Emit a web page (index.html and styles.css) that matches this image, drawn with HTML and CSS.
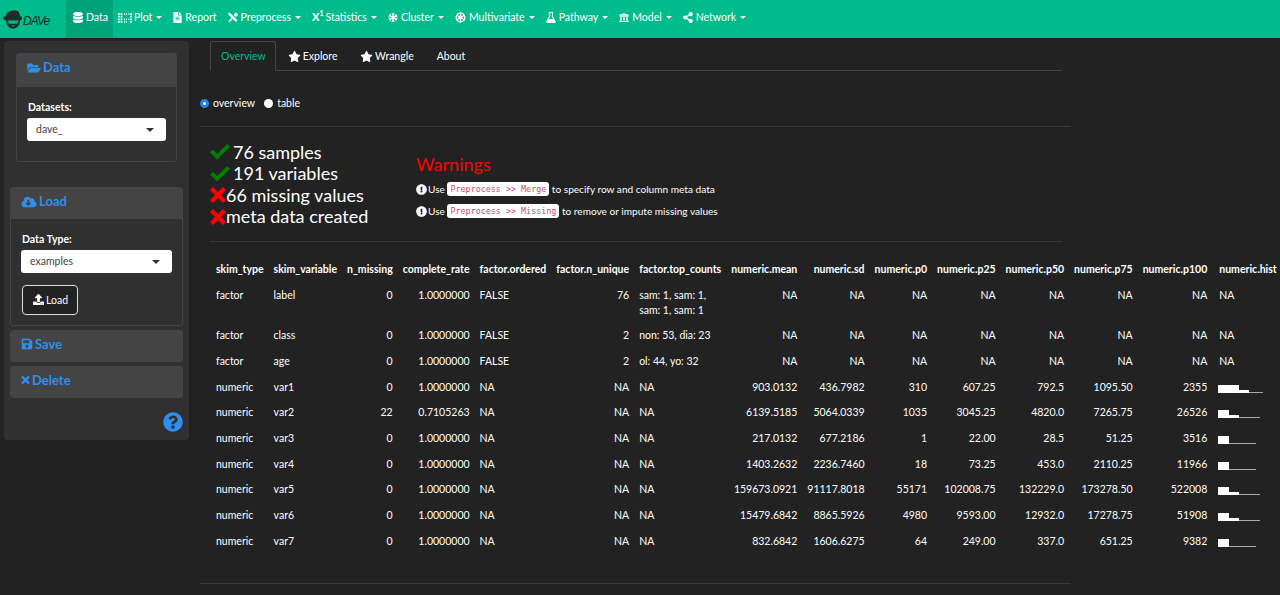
FILE: index.html
```html
<!DOCTYPE html>
<html lang="en">

<head>
  <meta charset="UTF-8" />
  <title>DAVe</title>
  <link rel="stylesheet" href="styles.css">
</head>

<body>

  <svg class="sprite" xmlns="http://www.w3.org/2000/svg">
    <symbol id="i-database" viewBox="0 0 448 512"><path d="M448 73.143v45.714C448 159.143 347.667 192 224 192S0 159.143 0 118.857V73.143C0 32.857 100.333 0 224 0s224 32.857 224 73.143zM448 176v102.857C448 319.143 347.667 352 224 352S0 319.143 0 278.857V176c48.125 33.143 136.208 48.572 224 48.572S399.874 209.143 448 176zm0 160v102.857C448 479.143 347.667 512 224 512S0 479.143 0 438.857V336c48.125 33.143 136.208 48.572 224 48.572S399.874 369.143 448 336z"/></symbol>
    <symbol id="i-grid" viewBox="0 0 16 12"><path d="M0 1h2v2H0zM3 1h2v2H3zM0 4h2v2H0zM3 4h2v2H3zM0 7h2v2H0zM3 7h2v2H3zM0 10h2v2H0zM3 10h2v2H3zM7 1h1v2H7zM9 1h1v2H9zM7 7h1v2H7zM9 7h1v2H9zM7 10h1v2H7zM9 10h1v2H9zM12 1h1v2h-1zM14 1h2v2h-2zM14 4h2v2h-2zM12 7h1v2h-1zM14 7h2v2h-2zM14 10h2v2h-2z"/></symbol>
    <symbol id="i-file" viewBox="0 0 384 512"><path d="M224 136V0H24C10.7 0 0 10.7 0 24v464c0 13.3 10.7 24 24 24h336c13.3 0 24-10.7 24-24V160H248c-13.2 0-24-10.8-24-24zm64 236c0 6.6-5.4 12-12 12H108c-6.6 0-12-5.4-12-12v-8c0-6.6 5.4-12 12-12h168c6.6 0 12 5.4 12 12v8zm0-64c0 6.6-5.4 12-12 12H108c-6.6 0-12-5.4-12-12v-8c0-6.6 5.4-12 12-12h168c6.6 0 12 5.4 12 12v8zm0-72v8c0 6.6-5.4 12-12 12H108c-6.6 0-12-5.4-12-12v-8c0-6.6 5.4-12 12-12h168c6.6 0 12 5.4 12 12zm96-114.1v6.1H256V0h6.1c6.4 0 12.5 2.5 17 7l97.9 98c4.5 4.5 7 10.6 7 16.9z"/></symbol>
    <symbol id="i-tools" viewBox="0 0 12 12"><path d="M2.6 0.6 11.4 9.4 9.4 11.4 0.6 2.6zM9.4 0.4c.6 0 1.1.1 1.6.4L9.2 2.6l.2 .3.3 .2 1.8-1.8c.5 1.2.2 2.4-.7 3.2-.5.5-1.2.7-1.8.7L7 3.2c0-1.5 1-2.8 2.4-2.8zM4.2 6.4 5.6 7.8 2.5 11c-.5.5-1 .5-1.5 0s-.5-1 0-1.5z"/><path d="M0 1.2 1.2 0 3.4 1.8 1.8 3.4z"/></symbol>
    <symbol id="i-snow" viewBox="0 0 24 24"><g fill="none" stroke="currentColor" stroke-width="3.4"><path d="M12 1v22M2.5 6.5l19 11M21.5 6.5l-19 11"/><path d="M8.5 2.5 12 6l3.5-3.5M8.5 21.5 12 18l3.5 3.5M1.5 10.5 6.5 9 5 4M22.5 13.5 17.5 15l1.5 5M22.5 10.5 17.5 9 19 4M1.5 13.5 6.5 15 5 20" stroke-width="2.4"/></g></symbol>
    <symbol id="i-wheel" viewBox="0 0 24 24"><g fill="none" stroke="currentColor"><circle cx="12" cy="12" r="9.5" stroke-width="3"/><circle cx="12" cy="12" r="3.5" stroke-width="2.4"/><path d="M12 1v22M2.5 6.5l19 11M21.5 6.5l-19 11" stroke-width="2.4"/></g></symbol>
    <symbol id="i-flask" viewBox="0 0 14 16"><path fill-rule="evenodd" d="M3.5 0h7v1.5H9.8v4.7l3.9 7.3c.6 1.2-.2 2.5-1.5 2.5H1.8C.5 16-.3 14.7.3 13.5l3.9-7.3V1.500h-.7zM5.7 1.500v5.100L4 10h6L8.300 6.600V1.500z"/></symbol>
    <symbol id="i-bank" viewBox="0 0 16 14"><path d="M8 0l8 3v1.200H0V3zM1 5h14v1H1zM2 6.500h2.400v5H2zM6.800 6.500h2.400v5H6.800zM11.600 6.500H14v5h-2.400zM1 12h14v1H1zM0 13h16v1H0z"/></symbol>
    <symbol id="i-share" viewBox="0 0 448 512"><path d="M352 320c-22.608 0-43.387 7.819-59.79 20.895l-102.486-64.054a96.551 96.551 0 0 0 0-41.683l102.486-64.054C308.613 184.181 329.392 192 352 192c53.019 0 96-42.981 96-96S405.019 0 352 0s-96 42.981-96 96c0 7.158.79 14.13 2.276 20.841L155.79 180.895C139.387 167.819 118.608 160 96 160c-53.019 0-96 42.981-96 96s42.981 96 96 96c22.608 0 43.387-7.819 59.79-20.895l102.486 64.054A96.301 96.301 0 0 0 256 416c0 53.019 42.981 96 96 96s96-42.981 96-96-42.981-96-96-96z"/></symbol>
    <symbol id="i-folder" viewBox="0 0 576 512"><path d="M572.694 292.093L500.27 416.248A63.997 63.997 0 0 1 444.989 448H45.025c-18.523 0-30.064-20.093-20.731-36.093l72.424-124.155A64 64 0 0 1 152 256h399.964c18.523 0 30.064 20.093 20.73 36.093zM152 224h328v-48c0-26.51-21.49-48-48-48H272l-64-64H48C21.49 64 0 85.49 0 112v278.046l69.077-118.418C86.214 242.25 117.989 224 152 224z"/></symbol>
    <symbol id="i-cloud" viewBox="0 0 640 512"><path d="M537.6 226.6c4.1-10.7 6.4-22.4 6.4-34.6 0-53-43-96-96-96-19.7 0-38.1 6-53.3 16.2C367 64.2 315.3 32 256 32c-88.4 0-160 71.6-160 160 0 2.7.1 5.4.2 8.1C40.2 219.8 0 273.2 0 336c0 79.5 64.5 144 144 144h368c70.7 0 128-57.3 128-128 0-61.9-44-113.6-102.4-125.4zm-132.9 88.7L299.3 420.7c-6.2 6.2-16.4 6.2-22.6 0L171.3 315.3c-10.1-10.1-2.9-27.3 11.3-27.3H248V176c0-8.8 7.2-16 16-16h48c8.8 0 16 7.2 16 16v112h65.4c14.2 0 21.4 17.2 11.3 27.3z"/></symbol>
    <symbol id="i-upload" viewBox="0 0 512 512"><path d="M296 384h-80c-13.3 0-24-10.7-24-24V192h-87.7c-17.8 0-26.7-21.5-14.1-34.1L242.3 5.7c7.5-7.5 19.8-7.5 27.3 0l152.2 152.2c12.6 12.6 3.7 34.1-14.1 34.1H320v168c0 13.3-10.7 24-24 24zm216-8v112c0 13.3-10.7 24-24 24H24c-13.3 0-24-10.7-24-24V376c0-13.3 10.7-24 24-24h136v8c0 30.9 25.1 56 56 56h80c30.9 0 56-25.1 56-56v-8h136c13.3 0 24 10.7 24 24zm-124 88c0-11-9-20-20-20s-20 9-20 20 9 20 20 20 20-9 20-20zm64 0c0-11-9-20-20-20s-20 9-20 20 9 20 20 20 20-9 20-20z"/></symbol>
    <symbol id="i-save" viewBox="0 0 448 512"><path d="M433.941 129.941l-83.882-83.882A48 48 0 0 0 316.118 32H48C21.49 32 0 53.49 0 80v352c0 26.51 21.49 48 48 48h352c26.51 0 48-21.49 48-48V163.882a48 48 0 0 0-14.059-33.941zM224 416c-35.346 0-64-28.654-64-64 0-35.346 28.654-64 64-64s64 28.654 64 64c0 35.346-28.654 64-64 64zm96-304.52V212c0 6.627-5.373 12-12 12H76c-6.627 0-12-5.373-12-12V108c0-6.627 5.373-12 12-12h228.52c3.183 0 6.235 1.264 8.485 3.515l3.48 3.48A11.996 11.996 0 0 1 320 111.48z"/></symbol>
    <symbol id="i-times" viewBox="0 0 352 512"><path d="M242.72 256l100.07-100.07c12.28-12.28 12.28-32.19 0-44.48l-22.24-22.24c-12.28-12.28-32.19-12.28-44.48 0L176 189.28 75.93 89.21c-12.28-12.28-32.19-12.28-44.48 0L9.21 111.45c-12.28 12.28-12.28 32.19 0 44.48L109.28 256 9.21 356.07c-12.28 12.28-12.28 32.19 0 44.48l22.24 22.24c12.28 12.28 32.2 12.28 44.48 0L176 322.72l100.07 100.07c12.28 12.28 32.2 12.28 44.48 0l22.24-22.24c12.28-12.28 12.28-32.19 0-44.48L242.72 256z"/></symbol>
    <symbol id="i-question" viewBox="0 0 512 512"><path d="M504 256c0 136.997-111.043 248-248 248S8 392.997 8 256C8 119.083 119.043 8 256 8s248 111.083 248 248zM262.655 90c-54.497 0-89.255 22.957-116.549 63.758-3.536 5.286-2.353 12.415 2.715 16.258l34.699 26.31c5.205 3.947 12.621 3.008 16.665-2.122 17.864-22.658 30.113-35.797 57.303-35.797 20.429 0 45.698 13.148 45.698 32.958 0 14.976-12.363 22.667-32.534 33.976C247.128 238.528 216 254.941 216 296v4c0 6.627 5.373 12 12 12h56c6.627 0 12-5.373 12-12v-1.333c0-28.462 83.186-29.647 83.186-106.667 0-58.002-60.165-102-116.531-102zM256 338c-25.365 0-46 20.635-46 46 0 25.364 20.635 46 46 46s46-20.636 46-46c0-25.365-20.635-46-46-46z"/></symbol>
    <symbol id="i-exclaim" viewBox="0 0 512 512"><path d="M504 256c0 136.997-111.043 248-248 248S8 392.997 8 256C8 119.083 119.043 8 256 8s248 111.083 248 248zm-248 50c-25.405 0-46 20.595-46 46s20.595 46 46 46 46-20.595 46-46-20.595-46-46-46zm-43.673-165.346l7.418 136c.347 6.364 5.609 11.346 11.982 11.346h48.546c6.373 0 11.635-4.982 11.982-11.346l7.418-136c.375-6.874-5.098-12.654-11.982-12.654h-63.383c-6.884 0-12.356 5.78-11.981 12.654z"/></symbol>
    <symbol id="i-star" viewBox="0 0 576 512"><path d="M259.3 17.8L194 150.2 47.9 171.5c-26.2 3.8-36.7 36.1-17.7 54.6l105.7 103-25 145.5c-4.5 26.3 23.2 46 46.4 33.7L288 439.6l130.7 68.7c23.2 12.2 50.9-7.4 46.4-33.7l-25-145.5 105.7-103c19-18.5 8.5-50.8-17.7-54.6L382 150.2 316.7 17.8c-11.7-23.6-45.6-23.9-57.4 0z"/></symbol>
    <symbol id="i-ok" viewBox="0 0 20 16"><path d="M0 8.5 2.8 5.7 7.2 10 17.2 0 20 2.8 7.2 15.6z"/></symbol>
    <symbol id="i-x" viewBox="0 0 16 16"><path d="M3 0 8 5 13 0 16 3 11 8 16 13 13 16 8 11 3 16 0 13 5 8 0 3z"/></symbol>
  </svg>

  <nav class="navbar">
    <div class="brand">
      <svg class="logo" viewBox="0 0 22 22">
        <path class="logo-hat" d="M3 7C4 2 8 .5 13 .5c3 0 4.5 1 5 3l1 3.5c1 0 2 1 2 2s-1 2-2 2l-.5 3c-1 4-4.5 6.5-7.500 6.500s-6-2.500-7-6l-.8-3.500C1.500 11 0 10 0 9s1.500-2 3-2z"/>
        <path class="logo-glass" d="M5 11.500h12v1.500h-1v2H6v-2H5zM9 17h4v1H9z"/>
      </svg>
      <span class="brand-name">DAVe</span>
    </div>
    <a class="nav-item active"><svg class="ni w10"><use href="#i-database"/></svg>Data</a>
    <a class="nav-item"><svg class="ni ni-grid"><use href="#i-grid"/></svg>Plot<i class="caret"></i></a>
    <a class="nav-item"><svg class="ni w9"><use href="#i-file"/></svg>Report</a>
    <a class="nav-item"><svg class="ni w10"><use href="#i-tools"/></svg>Preprocess<i class="caret"></i></a>
    <a class="nav-item"><span class="sup-icon">X<sup>1</sup></span>Statistics<i class="caret"></i></a>
    <a class="nav-item"><svg class="ni w10"><use href="#i-snow"/></svg>Cluster<i class="caret"></i></a>
    <a class="nav-item"><svg class="ni w11"><use href="#i-wheel"/></svg>Multivariate<i class="caret"></i></a>
    <a class="nav-item"><svg class="ni w10"><use href="#i-flask"/></svg>Pathway<i class="caret"></i></a>
    <a class="nav-item"><svg class="ni w10"><use href="#i-bank"/></svg>Model<i class="caret"></i></a>
    <a class="nav-item"><svg class="ni w10"><use href="#i-share"/></svg>Network<i class="caret"></i></a>
  </nav>

  <div class="page">
    <aside class="well">
      <section class="panel panel-data">
        <div class="panel-head"><svg class="pi w14"><use href="#i-folder"/></svg>Data</div>
        <div class="panel-body">
          <label class="field-label">Datasets:</label>
          <div class="select-box">dave_<i class="select-caret"></i></div>
        </div>
      </section>

      <section class="panel panel-load">
        <div class="panel-head"><svg class="pi w16"><use href="#i-cloud"/></svg>Load</div>
        <div class="panel-body">
          <label class="field-label">Data Type:</label>
          <div class="select-box">examples<i class="select-caret"></i></div>
          <button class="btn-load" type="button"><svg class="bi"><use href="#i-upload"/></svg>Load</button>
        </div>
      </section>

      <section class="panel panel-closed">
        <div class="panel-head"><svg class="pi w12"><use href="#i-save"/></svg>Save</div>
      </section>
      <section class="panel panel-closed">
        <div class="panel-head"><svg class="pi w9"><use href="#i-times"/></svg>Delete</div>
      </section>

      <div class="help"><svg class="help-icon"><use href="#i-question"/></svg></div>
    </aside>

    <main class="content">
      <ul class="tabs">
        <li class="tab active">Overview</li>
        <li class="tab"><svg class="ti"><use href="#i-star"/></svg>Explore</li>
        <li class="tab"><svg class="ti"><use href="#i-star"/></svg>Wrangle</li>
        <li class="tab">About</li>
      </ul>

      <div class="radios">
        <span class="radio checked"></span><span class="radio-label">overview</span>
        <span class="radio"></span><span class="radio-label">table</span>
      </div>

      <hr class="rule rule-wide">

      <div class="summary">
        <div class="checks">
          <div class="check"><svg class="ok"><use href="#i-ok"/></svg><span class="gap">76 samples</span></div>
          <div class="check"><svg class="ok"><use href="#i-ok"/></svg><span class="gap">191 variables</span></div>
          <div class="check"><svg class="bad"><use href="#i-x"/></svg>66 missing values</div>
          <div class="check"><svg class="bad"><use href="#i-x"/></svg>meta data created</div>
        </div>
        <div class="warnings">
          <h3>Warnings</h3>
          <p><svg class="wi"><use href="#i-exclaim"/></svg>Use <code>Preprocess &gt;&gt; Merge</code> to specify row and column meta data</p>
          <p><svg class="wi"><use href="#i-exclaim"/></svg>Use <code>Preprocess &gt;&gt; Missing</code> to remove or impute missing values</p>
        </div>
      </div>

      <hr class="rule rule-inner">

      <table class="skim">
        <thead>
          <tr>
            <th>skim_type</th><th>skim_variable</th><th class="r">n_missing</th><th class="r">complete_rate</th><th>factor.ordered</th><th class="r">factor.n_unique</th><th>factor.top_counts</th><th class="r">numeric.mean</th><th class="r">numeric.sd</th><th class="r">numeric.p0</th><th class="r">numeric.p25</th><th class="r">numeric.p50</th><th class="r">numeric.p75</th><th class="r">numeric.p100</th><th>numeric.hist</th>
          </tr>
        </thead>
        <tbody>
          <tr class="tall"><td>factor</td><td>label</td><td class="r">0</td><td class="r">1.0000000</td><td>FALSE</td><td class="r">76</td><td>sam: 1, sam: 1,<br>sam: 1, sam: 1</td><td class="r">NA</td><td class="r">NA</td><td class="r">NA</td><td class="r">NA</td><td class="r">NA</td><td class="r">NA</td><td class="r">NA</td><td>NA</td></tr>
          <tr><td>factor</td><td>class</td><td class="r">0</td><td class="r">1.0000000</td><td>FALSE</td><td class="r">2</td><td>non: 53, dia: 23</td><td class="r">NA</td><td class="r">NA</td><td class="r">NA</td><td class="r">NA</td><td class="r">NA</td><td class="r">NA</td><td class="r">NA</td><td>NA</td></tr>
          <tr><td>factor</td><td>age</td><td class="r">0</td><td class="r">1.0000000</td><td>FALSE</td><td class="r">2</td><td>ol: 44, yo: 32</td><td class="r">NA</td><td class="r">NA</td><td class="r">NA</td><td class="r">NA</td><td class="r">NA</td><td class="r">NA</td><td class="r">NA</td><td>NA</td></tr>
          <tr><td>numeric</td><td>var1</td><td class="r">0</td><td class="r">1.0000000</td><td>NA</td><td class="r">NA</td><td>NA</td><td class="r">903.0132</td><td class="r">436.7982</td><td class="r">310</td><td class="r">607.25</td><td class="r">792.5</td><td class="r">1095.50</td><td class="r">2355</td><td><svg class="hist" viewBox="0 0 46 10"><path d="M0 1h21v8H0zM21 6h10v3H21z"/><path class="hist-line" d="M31 8.5h14"/></svg></td></tr>
          <tr><td>numeric</td><td>var2</td><td class="r">22</td><td class="r">0.7105263</td><td>NA</td><td class="r">NA</td><td>NA</td><td class="r">6139.5185</td><td class="r">5064.0339</td><td class="r">1035</td><td class="r">3045.25</td><td class="r">4820.0</td><td class="r">7265.75</td><td class="r">26526</td><td><svg class="hist" viewBox="0 0 46 10"><path d="M0 1h11v8H0zM11 6h10v3H11z"/><path class="hist-line" d="M21 8.5h21"/></svg></td></tr>
          <tr><td>numeric</td><td>var3</td><td class="r">0</td><td class="r">1.0000000</td><td>NA</td><td class="r">NA</td><td>NA</td><td class="r">217.0132</td><td class="r">677.2186</td><td class="r">1</td><td class="r">22.00</td><td class="r">28.5</td><td class="r">51.25</td><td class="r">3516</td><td><svg class="hist" viewBox="0 0 46 10"><path d="M0 1h11v8H0z"/><path class="hist-line" d="M11 8.5h27"/></svg></td></tr>
          <tr><td>numeric</td><td>var4</td><td class="r">0</td><td class="r">1.0000000</td><td>NA</td><td class="r">NA</td><td>NA</td><td class="r">1403.2632</td><td class="r">2236.7460</td><td class="r">18</td><td class="r">73.25</td><td class="r">453.0</td><td class="r">2110.25</td><td class="r">11966</td><td><svg class="hist" viewBox="0 0 46 10"><path d="M0 1h11v8H0z"/><path class="hist-line" d="M11 8.5h27"/></svg></td></tr>
          <tr><td>numeric</td><td>var5</td><td class="r">0</td><td class="r">1.0000000</td><td>NA</td><td class="r">NA</td><td>NA</td><td class="r">159673.0921</td><td class="r">91117.8018</td><td class="r">55171</td><td class="r">102008.75</td><td class="r">132229.0</td><td class="r">173278.50</td><td class="r">522008</td><td><svg class="hist" viewBox="0 0 46 10"><path d="M0 1h11v8H0zM11 6h10v3H11z"/><path class="hist-line" d="M21 8.5h21"/></svg></td></tr>
          <tr><td>numeric</td><td>var6</td><td class="r">0</td><td class="r">1.0000000</td><td>NA</td><td class="r">NA</td><td>NA</td><td class="r">15479.6842</td><td class="r">8865.5926</td><td class="r">4980</td><td class="r">9593.00</td><td class="r">12932.0</td><td class="r">17278.75</td><td class="r">51908</td><td><svg class="hist" viewBox="0 0 46 10"><path d="M0 1h11v8H0zM11 6h10v3H11z"/><path class="hist-line" d="M21 8.5h21"/></svg></td></tr>
          <tr><td>numeric</td><td>var7</td><td class="r">0</td><td class="r">1.0000000</td><td>NA</td><td class="r">NA</td><td>NA</td><td class="r">832.6842</td><td class="r">1606.6275</td><td class="r">64</td><td class="r">249.00</td><td class="r">337.0</td><td class="r">651.25</td><td class="r">9382</td><td><svg class="hist" viewBox="0 0 46 10"><path d="M0 1h11v8H0z"/><path class="hist-line" d="M11 8.5h27"/></svg></td></tr>
        </tbody>
      </table>

      <hr class="rule rule-wide rule-bottom">
    </main>
  </div>

</body>

</html>
```

FILE: styles.css
```css
html, body {
  height: 595px;
  overflow: hidden;
}
body {
  margin: 0;
  background: #222;
  color: #fff;
  font-family: Lato, "Open Sans", sans-serif;
  font-size: 10.5px;
  line-height: 1.42857;
}
.sprite {
  display: none;
}
svg {
  fill: currentColor;
}

/* navbar */
.navbar {
  display: flex;
  height: 38px;
  background: #00bc8c;
}
.brand {
  display: flex;
  align-items: center;
  width: 66px;
  padding-left: 3px;
  box-sizing: border-box;
  color: #1c2b2b;
}
.logo {
  width: 20px;
  height: 20px;
  margin-top: 1px;
}
.logo-hat {
  fill: #1c2b2b;
}
.logo-glass {
  fill: #00bc8c;
}
.brand-name {
  margin-top: 5px;
  font-family: "Liberation Sans", sans-serif;
  font-style: italic;
  font-size: 12px;
  letter-spacing: -1px;
}
.nav-item {
  display: flex;
  align-items: center;
  padding: 0 5.5px 4px;
  color: #fff;
  white-space: nowrap;
}
.nav-item.active {
  background: #00a379;
  padding: 0 5px 4px 7px;
}
.nav-item.active + .nav-item {
  padding-left: 5px;
}
.ni {
  height: 11px;
  margin-right: 3px;
}
.ni-grid {
  width: 14px;
  margin-right: 2px;
}
.w9 { width: 9px; }
.w10 { width: 10px; }
.w11 { width: 11px; }
.w12 { width: 12px; }
.w14 { width: 14px; }
.w16 { width: 16px; }
.sup-icon {
  font-weight: 900;
  font-size: 11px;
  margin-right: 2px;
}
.sup-icon sup {
  font-size: 7px;
  line-height: 0;
}
.caret {
  width: 0;
  height: 0;
  margin-left: 4px;
  border-left: 3px solid transparent;
  border-right: 3px solid transparent;
  border-top: 3px solid #fff;
}

/* sidebar */
.page {
  display: flex;
  align-items: flex-start;
}
.well {
  width: 185px;
  height: 399px;
  margin: 3px 0 0 4px;
  padding: 12px 6px 0;
  box-sizing: border-box;
  background: #303030;
  border-radius: 4px;
  flex-shrink: 0;
}
.panel {
  background: #303030;
  border: 1px solid #444;
  border-radius: 3px;
  margin-bottom: 4px;
}
.panel-data {
  margin: 0 6px 25px;
  height: 109px;
  box-sizing: border-box;
}
.panel-load {
  height: 139px;
  box-sizing: border-box;
}
.panel-head {
  display: flex;
  align-items: center;
  height: 31px;
  padding: 0 0 4px 10px;
  box-sizing: border-box;
  background: #444;
  color: #2f8fee;
  font-size: 13px;
  font-weight: 700;
}
.panel-data .panel-head {
  height: 33px;
  padding-bottom: 6px;
}
.panel-closed .panel-head {
  height: 30px;
}
.pi {
  height: 12px;
  margin-right: 2px;
}
.panel-body {
  padding: 13px 10px 0;
}
.field-label {
  display: block;
  padding-left: 1px;
  font-weight: 700;
  margin-bottom: 3px;
}
.select-box {
  position: relative;
  height: 23px;
  line-height: 23px;
  padding-left: 9px;
  background: #fff;
  color: #444;
  border-radius: 3px;
}
.select-caret {
  position: absolute;
  right: 12px;
  top: 10px;
  border-left: 4px solid transparent;
  border-right: 4px solid transparent;
  border-top: 4px solid #333;
}
.btn-load {
  display: flex;
  align-items: center;
  width: 56px;
  height: 30px;
  margin: 12px 0 0 1px;
  padding: 0 0 0 10px;
  background: #222;
  color: #fff;
  border: 1px solid #ddd;
  border-radius: 4px;
  font-family: inherit;
  font-size: 10.5px;
}
.bi {
  width: 11px;
  height: 11px;
  margin-right: 2px;
}
.help {
  display: flex;
  justify-content: flex-end;
  margin-top: 14px;
}
.help-icon {
  width: 20px;
  height: 20px;
  color: #2f8fee;
}

/* main */
.content {
  width: 871px;
  margin: 3px 0 0 11px;
}
.tabs {
  display: flex;
  margin: 0 9px 0 10px;
  padding: 0;
  height: 30px;
  box-sizing: border-box;
  list-style: none;
  border-bottom: 1px solid #444;
}
.tab {
  display: flex;
  align-items: center;
  height: 30px;
  padding: 0 10.5px;
  margin-right: 2px;
  box-sizing: border-box;
  white-space: nowrap;
}
.tab.active {
  padding: 0 9px 0 10px;
  color: #00bc8c;
  background: #222;
  border: 1px solid #444;
  border-bottom-color: #222;
  border-radius: 3px 3px 0 0;
}
.ti {
  width: 13px;
  height: 11px;
  margin-right: 1.5px;
}
.radios {
  display: flex;
  align-items: center;
  height: 16px;
  margin-top: 24px;
}
.radio {
  width: 9px;
  height: 9px;
  box-sizing: border-box;
  border-radius: 50%;
  background: #fff;
  margin-right: 4px;
}
.radio.checked {
  border: 3px solid #2780e3;
}
.radio-label {
  margin-right: 9px;
}
.rule {
  border: 0;
  border-top: 1px solid #3a3a3a;
  margin: 0;
}
.rule-wide {
  margin-top: 15px;
}
.rule-inner {
  margin: 0 9px 0 10px;
}
.rule-bottom {
  margin-top: 29px;
}

/* summary */
.summary {
  display: flex;
  height: 114px;
}
.checks {
  width: 206px;
  margin: 14.5px 0 0 10px;
  font-size: 18px;
  line-height: 21.5px;
}
.check {
  display: flex;
  align-items: center;
  white-space: nowrap;
}
.gap {
  margin-left: 3px;
}
.ok {
  width: 20px;
  height: 16px;
  color: #008000;
}
.bad {
  width: 16px;
  height: 16px;
  color: #f00;
}
.warnings h3 {
  margin: 24px 0 1px;
  color: #f00;
  font-size: 18px;
  font-weight: 400;
  line-height: 26px;
}
.warnings p {
  display: flex;
  align-items: center;
  height: 22px;
  margin: 0;
  font-size: 10.1px;
  white-space: pre;
}
.wi {
  width: 11px;
  height: 11px;
  margin-right: 1px;
}
code {
  padding: 1px 3px;
  background: #fff;
  color: #cf4a6b;
  border-radius: 3px;
  font-family: "DejaVu Sans Mono", monospace;
  font-size: 8.4px;
}

/* table */
.skim {
  margin: 15px 0 0 11px;
  border-collapse: collapse;
  white-space: nowrap;
  line-height: 15.7px;
}
.skim th, .skim td {
  padding: 5px;
  vertical-align: top;
  text-align: left;
}
.skim th:last-child, .skim td:last-child {
  padding-left: 7px;
}
.skim th {
  font-weight: 700;
}
.skim .r {
  text-align: right;
}
.skim .tall td {
  line-height: 15.2px;
}
.hist {
  display: block;
  width: 46px;
  height: 10px;
  margin-top: 4px;
  margin-left: -1px;
}
.hist-line {
  stroke: #aaa;
  stroke-width: 1;
  fill: none;
}
```
